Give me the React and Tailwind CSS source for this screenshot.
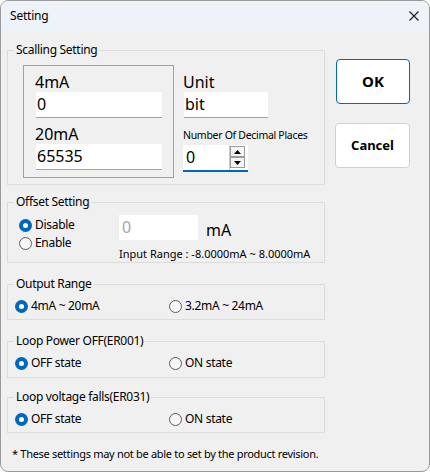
import { useState } from "react";

function Radio({ checked, label, onClick }) {
  return (
    <button type="button" onClick={onClick} className="flex items-center h-[18px] text-xs leading-4 tracking-[-0.3px] text-black">
      {checked ? (
        <span className="w-[13px] h-[13px] rounded-full bg-[#0067c0] flex items-center justify-center">
          <span className="w-[5px] h-[5px] rounded-full bg-white"></span>
        </span>
      ) : (
        <span className="w-[13px] h-[13px] rounded-full border border-[#5c5c5c] bg-[#f7f7f7]"></span>
      )}
      <span className="ml-[3px]">{label}</span>
    </button>
  );
}

// padding lives on the inner div, otherwise Chrome shifts the legend too
function Group({ title, className, bodyClass, children }) {
  return (
    <fieldset className={`border border-[#dcdcdc] ${className}`}>
      <legend className="ml-[6px] px-[2px] text-xs leading-4 tracking-[-0.3px] text-black">{title}</legend>
      <div className={bodyClass}>{children}</div>
    </fieldset>
  );
}

function Field({ value, className }) {
  return (
    <div className={`h-[26px] bg-white border-b border-[#a3a3a3] pl-[1px] text-base leading-[25px] text-black ${className}`}>
      {value}
    </div>
  );
}

function Arrow({ up }) {
  return (
    <span className="w-[15px] h-[11px] border border-[#9c9c9c] bg-[#f5f5f5] flex items-center justify-center">
      <svg width="7" height="4" viewBox="0 0 7 4">
        {up ? <path d="M0 4 L3.5 0 L7 4 Z" fill="#000" /> : <path d="M0 0 L3.5 4 L7 0 Z" fill="#000" />}
      </svg>
    </span>
  );
}

function StateRow({ value, onChange, a, b, left = "a" }) {
  return (
    <div className="flex">
      <div className="w-[154px]">
        <Radio checked={value === left} label={a} onClick={() => onChange(left)} />
      </div>
      <Radio checked={value !== left} label={b} onClick={() => onChange("b")} />
    </div>
  );
}

export default function App() {
  const [offset, setOffset] = useState("disable");
  const [range, setRange] = useState("a");
  const [loopPower, setLoopPower] = useState("a");
  const [loopVolt, setLoopVolt] = useState("a");

  return (
    <div className="w-[430px] h-[472px] flex flex-col bg-[#f0f0f0] border border-[#9a9a9a] rounded-lg overflow-hidden font-['Noto_Sans',sans-serif] text-black">
      {/* title bar */}
      <div className="h-[30px] shrink-0 bg-[#eef3f9] flex items-center justify-between pl-[9px] pr-[10px]">
        <span className="text-xs leading-4 tracking-[-0.2px]">Setting</span>
        <svg width="10" height="10" viewBox="0 0 10 10">
          <path d="M0.5 0.5 L9.5 9.5 M9.5 0.5 L0.5 9.5" stroke="#1a1a1a" strokeWidth="1.1" />
        </svg>
      </div>

      <div className="flex pl-[6px] pt-[11px]">
        {/* left column */}
        <div className="w-[318px] flex flex-col">
          <Group title="Scalling Setting" bodyClass="flex pl-[15px] pt-[7px] pb-[6px]">
            <div className="w-[151px] border border-[#a0a0a0] pt-[6px] pb-[7px] pl-[12px]">
              <div className="text-base leading-5 -ml-[1px]">4mA</div>
              <Field value="0" className="w-[126px]" />
              <div className="text-base leading-5 mt-[6px] -ml-[1px]">20mA</div>
              <Field value="65535" className="w-[126px]" />
            </div>
            <div className="ml-[9px] pt-[7px] flex flex-col">
              <div className="text-base leading-5">Unit</div>
              <Field value="bit" className="w-[84px] ml-[1px]" />
              <div className="text-[10.5px] leading-[14px] tracking-[-0.3px] mt-[10px] whitespace-nowrap">Number Of Decimal Places</div>
              <div className="mt-[3px] w-[65px] h-[27px] bg-white border-b-2 border-[#0067c0] flex">
                <span className="flex-1 pl-[3px] text-base leading-[25px]">0</span>
                <div className="w-[16px] border-l border-[#c8c8c8] pt-[1px] mr-[3px] flex flex-col">
                  <Arrow up />
                  <Arrow />
                </div>
              </div>
            </div>
          </Group>

          <Group title="Offset Setting" className="mt-[9px]" bodyClass="flex pl-[11px] pb-[1px]">
            <div className="w-[100px] pt-[6px] flex flex-col">
              <Radio checked={offset === "disable"} label="Disable" onClick={() => setOffset("disable")} />
              <Radio checked={offset === "enable"} label="Enable" onClick={() => setOffset("enable")} />
            </div>
            <div className="pt-[5px] flex flex-col">
              <div className="flex items-end">
                <div className="w-[79px] h-[25px] bg-white pl-[3px] text-base leading-[25px] text-[#a6a6a6]">0</div>
                <span className="ml-[8px] text-base leading-5">mA</span>
              </div>
              <div className="mt-[7px] text-[11px] leading-[14px] whitespace-nowrap">Input Range : -8.0000mA ~ 8.0000mA</div>
            </div>
          </Group>

          <Group title="Output Range" className="mt-[13px]" bodyClass="pl-[7px] pt-[5px] pb-[4px]">
            <StateRow value={range} onChange={setRange} a="4mA ~ 20mA" b="3.2mA ~ 24mA" />
          </Group>

          <Group title="Loop Power OFF(ER001)" className="mt-[13px]" bodyClass="pl-[7px] pt-[5px] pb-[5px]">
            <StateRow value={loopPower} onChange={setLoopPower} a="OFF state" b="ON state" />
          </Group>

          <Group title="Loop voltage falls(ER031)" className="mt-[11px]" bodyClass="pl-[7px] pt-[5px] pb-[4px]">
            <StateRow value={loopVolt} onChange={setLoopVolt} a="OFF state" b="ON state" />
          </Group>

          <p className="mt-[14px] ml-[5px] text-[11px] leading-[14px] tracking-[-0.3px] whitespace-nowrap">
            * These settings may not be able to set by the product revision.
          </p>
        </div>

        {/* buttons */}
        <div className="ml-[11px] pt-[17px] flex flex-col">
          <button type="button" className="w-[74px] h-[45px] bg-white border border-[#0067c0] rounded-[4px] text-[15px] font-bold">
            OK
          </button>
          <button type="button" className="mt-[19px] -ml-[1px] w-[75px] h-[45px] bg-white border border-[#d0d0d0] rounded-[4px] text-[13px] font-bold">
            Cancel
          </button>
        </div>
      </div>
    </div>
  );
}
